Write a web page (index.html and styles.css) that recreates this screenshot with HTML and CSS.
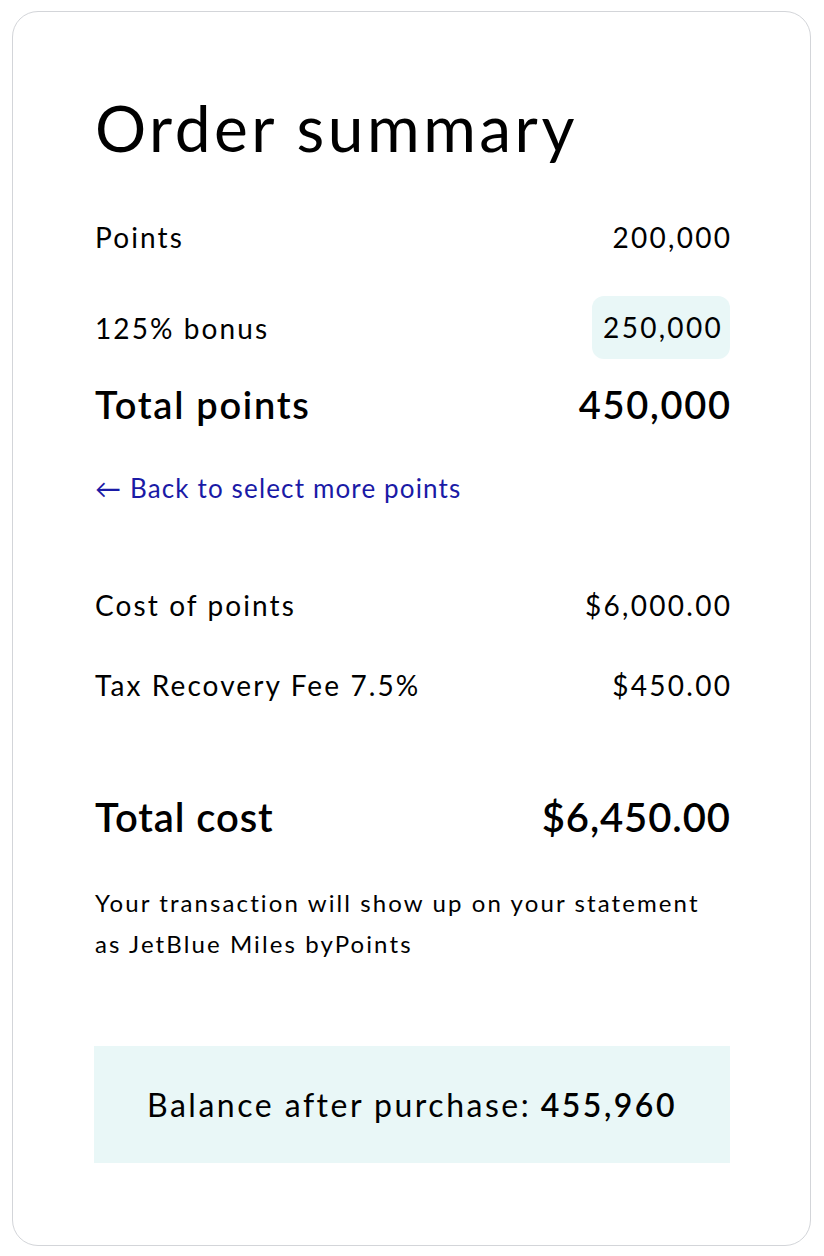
FILE: index.html
```html
<!DOCTYPE html>
<html lang="en">
<head>
<meta charset="utf-8">
<title>Order summary</title>
<link rel="stylesheet" href="styles.css">
</head>
<body>
<main class="card">
  <h1 class="title">Order summary</h1>
  <div class="row row-points">
    <span class="label">Points</span>
    <span class="value">200,000</span>
  </div>
  <div class="row row-bonus">
    <span class="label">125% bonus</span>
    <span class="value badge">250,000</span>
  </div>
  <div class="row row-total">
    <span>Total points</span>
    <span>450,000</span>
  </div>
  <a class="back" href="#">← Back to select more points</a>
  <div class="row row-cost">
    <span class="label">Cost of points</span>
    <span class="value">$6,000.00</span>
  </div>
  <div class="row row-tax">
    <span class="label">Tax Recovery Fee 7.5%</span>
    <span class="value">$450.00</span>
  </div>
  <div class="row row-grand">
    <span>Total cost</span>
    <span>$6,450.00</span>
  </div>
  <p class="note">Your transaction will show up on your statement<br>as JetBlue Miles byPoints</p>
  <div class="balance">Balance after purchase: <strong>455,960</strong></div>
</main>
</body>
</html>
```
FILE: styles.css
```css
* { box-sizing: border-box; }
html, body { margin: 0; padding: 0; background: #ffffff; }
body {
  font-family: Lato, "Noto Sans", sans-serif;
  font-variant-ligatures: none;
  color: #000;
}
.card {
  margin: 11px 13px 0 12px;
  height: 1235px;
  border: 1px solid #d3d5d9;
  border-radius: 26px;
  padding: 76px 80px 0 81px;
  display: flex;
  flex-direction: column;
}
.title {
  margin: 0;
  font-size: 64px;
  font-weight: 400;
  line-height: 80px;
  letter-spacing: 3.5px;
  padding-left: 1px;
}
.row {
  display: flex;
  justify-content: space-between;
  align-items: center;
  font-size: 28px;
  line-height: 40px;
  padding-left: 1px;
}
.label { letter-spacing: 2.1px; }
.value { letter-spacing: 2.3px; margin-right: -2.3px; }
.row-points { margin-top: 49px; }
.row-bonus { margin-top: 39px; height: 63px; }
.badge {
  background: #e9f7f7;
  border-radius: 12px;
  padding: 11px 7px 12px 11px;
  margin-right: 0;
}
.row-total {
  margin-top: 21px;
  font-size: 38px;
  line-height: 48px;
  font-weight: 600;
  letter-spacing: 1.7px;
  margin-right: -1.7px;
}
.back {
  margin-top: 42px;
  padding-left: 1px;
  font-size: 26px;
  line-height: 36px;
  letter-spacing: 1.15px;
  color: #1a1aa6;
  text-decoration: none;
}
.row-cost { margin-top: 79px; }
.row-tax { margin-top: 40px; }
.row-grand {
  margin-top: 87px;
  font-size: 40px;
  line-height: 50px;
  font-weight: 600;
  letter-spacing: 0.9px;
  margin-right: -0.9px;
}
.note {
  margin: 40px 0 0 0;
  padding-left: 1px;
  font-size: 24px;
  line-height: 41px;
  letter-spacing: 2.1px;
}
.balance {
  margin-top: 82px;
  height: 117px;
  background: #e9f7f7;
  display: flex;
  align-items: center;
  justify-content: center;
  font-size: 32px;
  line-height: 40px;
  letter-spacing: 2.5px;
}
.balance strong { font-weight: 600; margin-left: 0.3em; }
```
